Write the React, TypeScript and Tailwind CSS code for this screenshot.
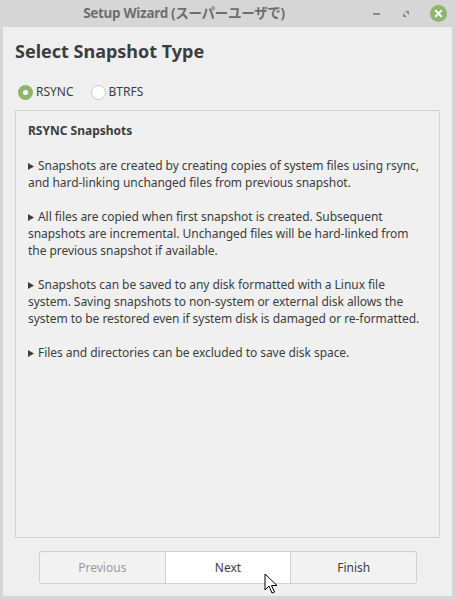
import React from "react";

const font = { fontFamily: '"Noto Sans", "Noto Sans CJK JP", sans-serif' };

export default function App() {
  const paras = [
    "Snapshots are created by creating copies of system files using rsync, and hard-linking unchanged files from previous snapshot.",
    "All files are copied when first snapshot is created. Subsequent snapshots are incremental. Unchanged files will be hard-linked from the previous snapshot if available.",
    "Snapshots can be saved to any disk formatted with a Linux file system. Saving snapshots to non-system or external disk allows the system to be restored even if system disk is damaged or re-formatted.",
    "Files and directories can be excluded to save disk space.",
  ];
  return (
    <div className="w-[455px] h-[599px] bg-[#d6d6d6] flex flex-col relative overflow-hidden" style={font}>
      <div className="h-[27px] flex items-center relative shrink-0">
        <div className="absolute left-0 right-0 top-0 h-[27px] flex items-center justify-center pr-[87px]">
          <span className="text-[13.5px] font-bold text-[#6e6e6e] tracking-[-0.3px]">Setup Wizard (スーパーユーザで)</span>
        </div>
        <div className="ml-auto flex items-center h-full">
          <div className="w-[30px] flex justify-center">
            <div className="w-[7px] h-[2px] bg-[#8a8a8a]" />
          </div>
          <div className="w-[30px] flex justify-center">
            <svg width="8" height="8" viewBox="0 0 8 8">
              <path d="M3 1 L7 1 L7 5 Z" fill="#8a8a8a" />
              <path d="M1 3 L1 7 L5 7 Z" fill="#8a8a8a" />
            </svg>
          </div>
          <div className="w-[34px] flex justify-center">
            <svg width="17" height="17" viewBox="0 0 17 17">
              <circle cx="8.5" cy="8.5" r="8.5" fill="#8fb56d" />
              <path d="M5.8 5.8 L11.2 11.2 M11.2 5.8 L5.8 11.2" stroke="#fff" strokeWidth="2" strokeLinecap="round" />
            </svg>
          </div>
        </div>
      </div>
      <div className="flex-1 mx-[3px] mb-[3px] bg-[#efefef] flex flex-col px-[12px]">
        <h1 className="text-[18px] font-bold text-[#3d3d3d] mt-[11px] leading-[26px]">Select Snapshot Type</h1>
        <div className="flex items-center mt-[19px] ml-[3px] h-[18px]">
          <div className="w-[15px] h-[15px] rounded-full bg-[#8fb56d] flex items-center justify-center">
            <div className="w-[5px] h-[5px] rounded-full bg-white" />
          </div>
          <span className="ml-[3px] text-[12px] text-[#3d3d3d]">RSYNC</span>
          <div className="ml-[17px] w-[15px] h-[15px] rounded-full bg-white border border-[#c8c8c8]" />
          <span className="ml-[3px] text-[12px] text-[#3d3d3d]">BTRFS</span>
        </div>
        <div className="mt-[9px] h-[428px] border border-[#d3d3d3] bg-[#f0f0f0] px-[12px] pt-[11px] text-[12px] leading-[17px] text-[#3d3d3d]">
          <div className="font-bold">RSYNC Snapshots</div>
          <div className="mt-[18px]">
            {paras.map((p, i) => (
              <p key={i} className={i === 0 ? "tracking-[-0.05px]" : "mt-[17px] tracking-[-0.05px]"}>
                <svg className="inline-block align-[0px] mr-[4px]" width="6" height="7" viewBox="0 0 6 7">
                  <path d="M0 0 L6 3.5 L0 7 Z" fill="#3d3d3d" />
                </svg>
                {p}
              </p>
            ))}
          </div>
        </div>
        <div className="mt-[13px] ml-[24px] flex w-[378px] h-[33px] rounded-[3px] border border-[#d0d0d0] overflow-hidden text-[12px]">
          <div className="flex-1 flex items-center justify-center text-[#9a9a9a] bg-[#f2f2f2]">Previous</div>
          <div className="flex-1 flex items-center justify-center text-[#3d3d3d] bg-white border-l border-[#d0d0d0]">Next</div>
          <div className="flex-1 flex items-center justify-center text-[#3d3d3d] bg-[#f2f2f2] border-l border-[#d0d0d0]">Finish</div>
        </div>
      </div>
      <svg className="absolute left-[264px] top-[573px]" width="14" height="22" viewBox="0 0 14 22">
        <path d="M1 1 L1 17 L5 13 L8 20 L10.5 19 L7.5 12.5 L13 12.5 Z" fill="#fff" stroke="#000" strokeWidth="1" strokeLinejoin="round" />
      </svg>
    </div>
  );
}
